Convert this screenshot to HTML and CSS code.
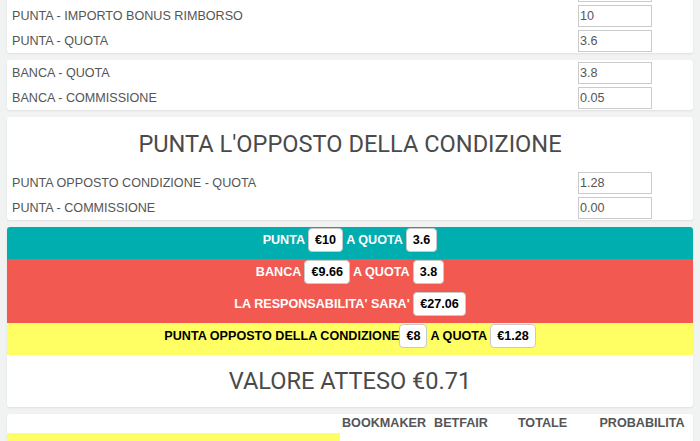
FILE: index.html
```html
<!DOCTYPE html>
<html lang="it">
<head>
    <meta charset="UTF-8">
    <meta name="viewport" content="width=device-width, initial-scale=1.0">
    <title>Calcolatore Rimborso</title>
    <link rel="stylesheet" href="styles.css">
</head>
<body>
    <div class="page">
        <div class="card">
            <div class="field">
                <label></label>
                <input type="text" value="">
            </div>
            <div class="field">
                <label>PUNTA - IMPORTO BONUS RIMBORSO</label>
                <input type="text" value="10">
            </div>
            <div class="field">
                <label>PUNTA - QUOTA</label>
                <input type="text" value="3.6">
            </div>
        </div>

        <div class="card">
            <div class="field">
                <label>BANCA - QUOTA</label>
                <input type="text" value="3.8">
            </div>
            <div class="field">
                <label>BANCA - COMMISSIONE</label>
                <input type="text" value="0.05">
            </div>
        </div>

        <div class="card">
            <h2 class="card-title">PUNTA L'OPPOSTO DELLA CONDIZIONE</h2>
            <div class="field">
                <label>PUNTA OPPOSTO CONDIZIONE - QUOTA</label>
                <input type="text" value="1.28">
            </div>
            <div class="field">
                <label>PUNTA - COMMISSIONE</label>
                <input type="text" value="0.00">
            </div>
        </div>

        <div class="card">
            <div class="bar bar-teal">
                PUNTA <span class="pill">€10</span> A QUOTA <span class="pill">3.6</span>
            </div>
            <div class="bar bar-red">
                BANCA <span class="pill">€9.66</span> A QUOTA <span class="pill">3.8</span>
            </div>
            <div class="bar bar-red">
                LA RESPONSABILITA' SARA' <span class="pill">€27.06</span>
            </div>
            <div class="bar bar-yellow">
                PUNTA OPPOSTO DELLA CONDIZIONE<span class="pill">€8</span> A QUOTA <span class="pill">€1.28</span>
            </div>
            <div class="expected">VALORE ATTESO €0.71</div>
        </div>

        <div class="card">
            <div class="table">
                <div class="cell"></div>
                <div class="cell head">BOOKMAKER</div>
                <div class="cell head">BETFAIR</div>
                <div class="cell head">TOTALE</div>
                <div class="cell head">PROBABILITA</div>

                <div class="cell name"></div>
                <div class="cell"></div>
                <div class="cell"></div>
                <div class="cell"></div>
                <div class="cell"></div>
            </div>
        </div>
    </div>
</body>
</html>
```

FILE: styles.css
```css
body {
    margin: 0;
    background-color: #f1f2f2;
    font-family: 'Liberation Sans', Arial, sans-serif;
    font-size: 12.6px;
    color: #555;
}
.page {
    margin-top: -22px; /* page is scrolled a little */
    padding: 0 7px;
}
.card {
    background-color: #ffffff;
    border-radius: 3px;
    box-shadow: 0 1px 2px rgba(0, 0, 0, 0.08);
    margin-bottom: 7px;
    overflow: hidden;
}
.field {
    display: flex;
    align-items: center;
    height: 25px;
    padding: 0 41px 0 5px;
}
.field label {
    flex: 1;
}
.field input {
    box-sizing: border-box;
    width: 74px;
    height: 22px;
    padding: 0 1px;
    border: 1px solid #cbcbcb;
    font-family: inherit;
    font-size: 12.6px;
    color: #555;
}
.card-title {
    margin: 0;
    height: 53px;
    line-height: 54px;
    text-align: center;
    font-family: Roboto, sans-serif;
    font-weight: 400;
    font-size: 23.6px;
    color: #4a4a4a;
}
.bar {
    padding: 1px 0 7px;
    line-height: 24px;
    text-align: center;
    font-weight: bold;
    color: #ffffff;
}
.bar-teal {
    background-color: #00adaf;
}
.bar-red {
    background-color: #f15951;
}
.bar-yellow {
    background-color: #ffff63;
    color: #000;
}
.pill {
    display: inline-block;
    box-sizing: border-box;
    height: 24px;
    line-height: 22px;
    padding: 0 6px;
    background-color: #ffffff;
    border: 1px solid #c9c9c9;
    border-radius: 4px;
    color: #000;
    vertical-align: top;
}
.expected {
    height: 52px;
    line-height: 52px;
    text-align: center;
    font-family: Roboto, sans-serif;
    font-size: 23.6px;
    color: #4a4a4a;
}
.table {
    display: grid;
    grid-template-columns: 333px 88px 66px 97px 102px;
}
.cell {
    line-height: 19px;
    text-align: center;
}
.cell.head {
    font-weight: bold;
}
.cell.name {
    background-color: #ffff63;
    height: 20px;
}
```
